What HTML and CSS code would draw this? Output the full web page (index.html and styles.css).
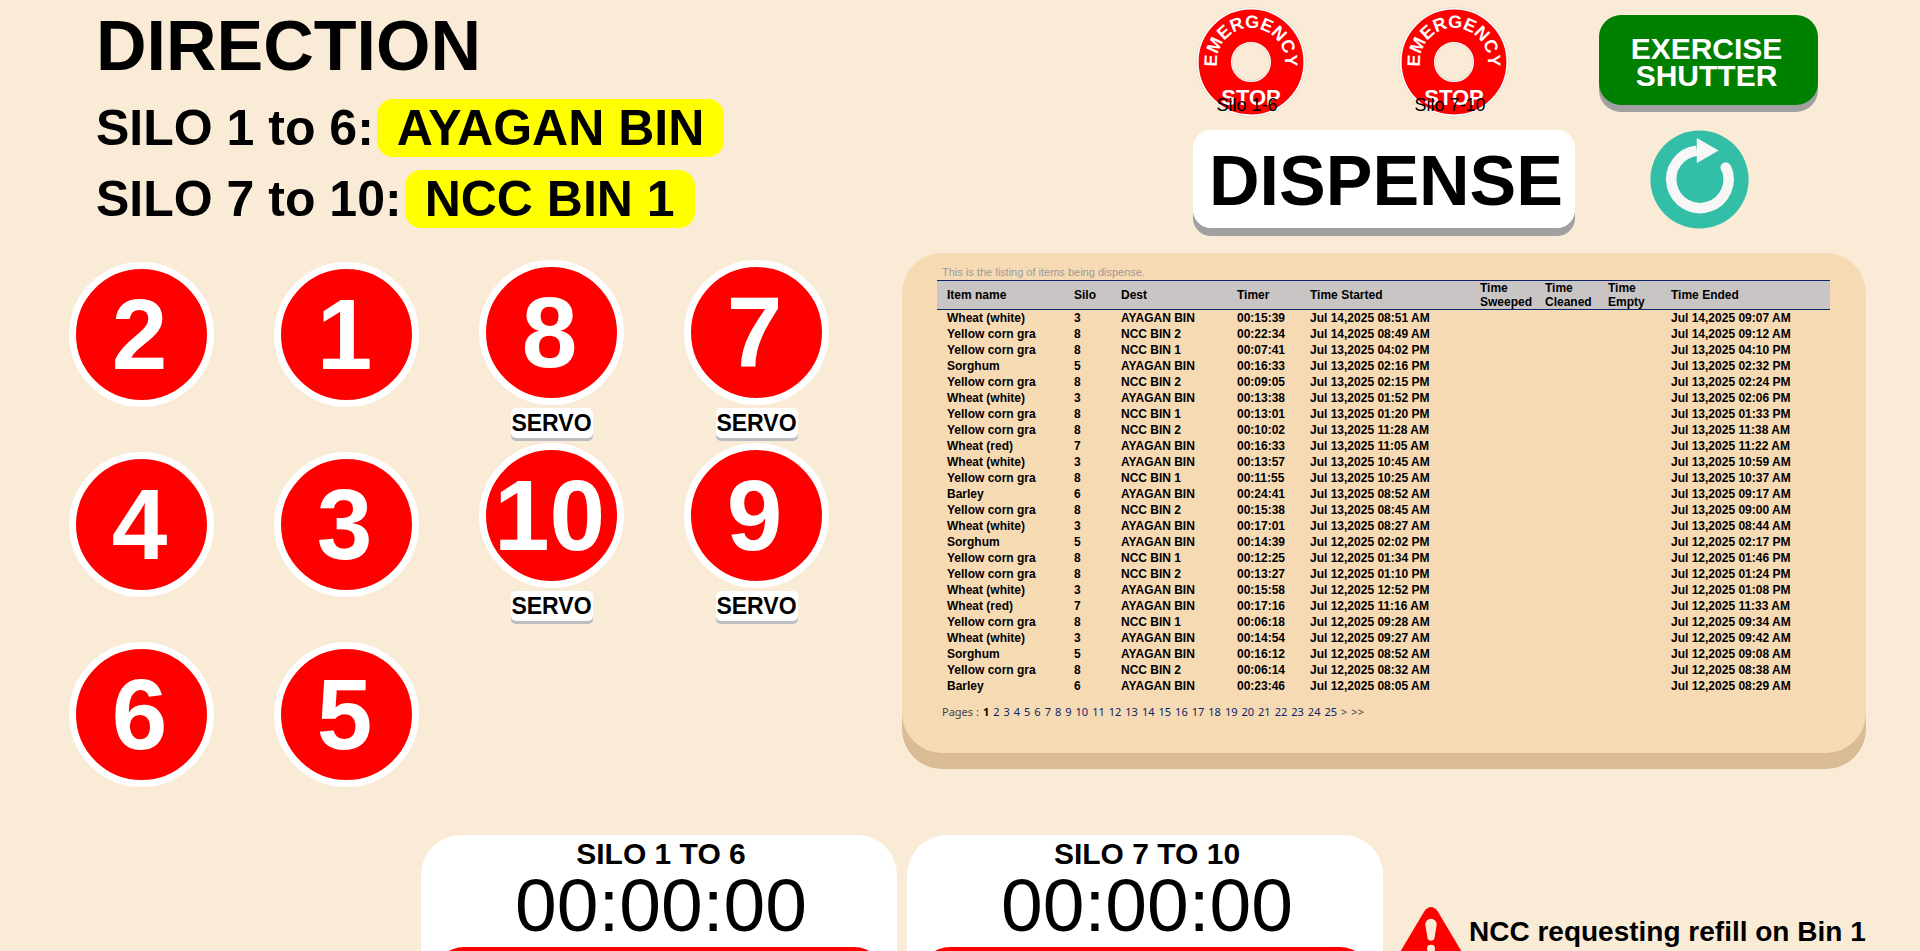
FILE: index.html
```html
<!DOCTYPE html>
<html lang="en">
<head>
<meta charset="utf-8">
<title>Silo dispenser</title>
<link rel="stylesheet" href="styles.css">
</head>
<body>
<main class="page">
  <section class="left">
    <div class="direction">
      <h1 class="direction-title">DIRECTION</h1>
      <p class="route">SILO 1 to 6:<span class="bin">AYAGAN BIN</span></p>
      <p class="route">SILO 7 to 10:<span class="bin">NCC BIN 1</span></p>
    </div>
    <div class="board">
      <div class="stack">
        <button class="silo">2</button>
        <button class="silo">4</button>
        <button class="silo">6</button>
      </div>
      <div class="stack">
        <button class="silo">1</button>
        <button class="silo">3</button>
        <button class="silo">5</button>
      </div>
      <div class="stack servo-stack">
        <button class="silo">8</button>
        <button class="servo">SERVO</button>
        <button class="silo">10</button>
        <button class="servo">SERVO</button>
      </div>
      <div class="stack servo-stack">
        <button class="silo">7</button>
        <button class="servo">SERVO</button>
        <button class="silo">9</button>
        <button class="servo">SERVO</button>
      </div>
    </div>
  </section>

  <section class="right">
    <div class="controls controls-top">
      <div class="stops">
        <button class="stop">
          <svg class="stop-sign" viewBox="-55 -55 110 110">
            <circle r="36.5" fill="none" stroke="#d8cfc4" stroke-width="36"/>
            <circle r="36.5" fill="none" stroke="#fff" stroke-width="35"/>
            <circle r="36.2" fill="none" stroke="#f00" stroke-width="32.4"/>
            <path id="arc-a" d="M-31.4 13A34 34 0 1 1 31.4 13" fill="none"/>
            <text class="stop-arc"><textPath href="#arc-a" startOffset="50%">EMERGENCY</textPath></text>
            <text class="stop-word" y="43">STOP</text>
          </svg>
          <span class="stop-label">Silo 1-6</span>
        </button>
        <button class="stop">
          <svg class="stop-sign" viewBox="-55 -55 110 110">
            <circle r="36.5" fill="none" stroke="#d8cfc4" stroke-width="36"/>
            <circle r="36.5" fill="none" stroke="#fff" stroke-width="35"/>
            <circle r="36.2" fill="none" stroke="#f00" stroke-width="32.4"/>
            <path id="arc-b" d="M-31.4 13A34 34 0 1 1 31.4 13" fill="none"/>
            <text class="stop-arc"><textPath href="#arc-b" startOffset="50%">EMERGENCY</textPath></text>
            <text class="stop-word" y="43">STOP</text>
          </svg>
          <span class="stop-label">Silo 7-10</span>
        </button>
      </div>
      <button class="exercise">EXERCISE<br>SHUTTER</button>
    </div>
    <div class="controls controls-main">
      <button class="dispense">DISPENSE</button>
      <button class="refresh" aria-label="Refresh">
        <svg class="refresh-icon" viewBox="-50 -50 100 100">
          <circle r="49.6" fill="#33bea8"/>
          <path d="M26.8 -12.2A29 29 0 1 1 -2.7 -29" fill="none" stroke="#f7f7f7" stroke-width="10.6"/>
          <circle cx="26.4" cy="-12.2" r="5.2" fill="#f7f7f7"/>
          <path d="M-2.7 -42L19.3 -29.3L-2.7 -16.7Z" fill="#f7f7f7"/>
        </svg>
      </button>
    </div>

    <div class="panel">
      <p class="note">This is the listing of items being dispense.</p>
      <table class="log">
        <colgroup>
          <col class="c-item"><col class="c-silo"><col class="c-dest"><col class="c-timer"><col class="c-start"><col class="c-swept"><col class="c-step"><col class="c-step"><col>
        </colgroup>
        <thead>
          <tr><th>Item name</th><th>Silo</th><th>Dest</th><th>Timer</th><th>Time Started</th><th>Time<br>Sweeped</th><th>Time<br>Cleaned</th><th>Time<br>Empty</th><th>Time Ended</th></tr>
        </thead>
        <tbody>
          <tr><td>Wheat (white)</td><td>3</td><td>AYAGAN BIN</td><td>00:15:39</td><td>Jul 14,2025 08:51 AM</td><td></td><td></td><td></td><td>Jul 14,2025 09:07 AM</td></tr>
          <tr><td>Yellow corn gra</td><td>8</td><td>NCC BIN 2</td><td>00:22:34</td><td>Jul 14,2025 08:49 AM</td><td></td><td></td><td></td><td>Jul 14,2025 09:12 AM</td></tr>
          <tr><td>Yellow corn gra</td><td>8</td><td>NCC BIN 1</td><td>00:07:41</td><td>Jul 13,2025 04:02 PM</td><td></td><td></td><td></td><td>Jul 13,2025 04:10 PM</td></tr>
          <tr><td>Sorghum</td><td>5</td><td>AYAGAN BIN</td><td>00:16:33</td><td>Jul 13,2025 02:16 PM</td><td></td><td></td><td></td><td>Jul 13,2025 02:32 PM</td></tr>
          <tr><td>Yellow corn gra</td><td>8</td><td>NCC BIN 2</td><td>00:09:05</td><td>Jul 13,2025 02:15 PM</td><td></td><td></td><td></td><td>Jul 13,2025 02:24 PM</td></tr>
          <tr><td>Wheat (white)</td><td>3</td><td>AYAGAN BIN</td><td>00:13:38</td><td>Jul 13,2025 01:52 PM</td><td></td><td></td><td></td><td>Jul 13,2025 02:06 PM</td></tr>
          <tr><td>Yellow corn gra</td><td>8</td><td>NCC BIN 1</td><td>00:13:01</td><td>Jul 13,2025 01:20 PM</td><td></td><td></td><td></td><td>Jul 13,2025 01:33 PM</td></tr>
          <tr><td>Yellow corn gra</td><td>8</td><td>NCC BIN 2</td><td>00:10:02</td><td>Jul 13,2025 11:28 AM</td><td></td><td></td><td></td><td>Jul 13,2025 11:38 AM</td></tr>
          <tr><td>Wheat (red)</td><td>7</td><td>AYAGAN BIN</td><td>00:16:33</td><td>Jul 13,2025 11:05 AM</td><td></td><td></td><td></td><td>Jul 13,2025 11:22 AM</td></tr>
          <tr><td>Wheat (white)</td><td>3</td><td>AYAGAN BIN</td><td>00:13:57</td><td>Jul 13,2025 10:45 AM</td><td></td><td></td><td></td><td>Jul 13,2025 10:59 AM</td></tr>
          <tr><td>Yellow corn gra</td><td>8</td><td>NCC BIN 1</td><td>00:11:55</td><td>Jul 13,2025 10:25 AM</td><td></td><td></td><td></td><td>Jul 13,2025 10:37 AM</td></tr>
          <tr><td>Barley</td><td>6</td><td>AYAGAN BIN</td><td>00:24:41</td><td>Jul 13,2025 08:52 AM</td><td></td><td></td><td></td><td>Jul 13,2025 09:17 AM</td></tr>
          <tr><td>Yellow corn gra</td><td>8</td><td>NCC BIN 2</td><td>00:15:38</td><td>Jul 13,2025 08:45 AM</td><td></td><td></td><td></td><td>Jul 13,2025 09:00 AM</td></tr>
          <tr><td>Wheat (white)</td><td>3</td><td>AYAGAN BIN</td><td>00:17:01</td><td>Jul 13,2025 08:27 AM</td><td></td><td></td><td></td><td>Jul 13,2025 08:44 AM</td></tr>
          <tr><td>Sorghum</td><td>5</td><td>AYAGAN BIN</td><td>00:14:39</td><td>Jul 12,2025 02:02 PM</td><td></td><td></td><td></td><td>Jul 12,2025 02:17 PM</td></tr>
          <tr><td>Yellow corn gra</td><td>8</td><td>NCC BIN 1</td><td>00:12:25</td><td>Jul 12,2025 01:34 PM</td><td></td><td></td><td></td><td>Jul 12,2025 01:46 PM</td></tr>
          <tr><td>Yellow corn gra</td><td>8</td><td>NCC BIN 2</td><td>00:13:27</td><td>Jul 12,2025 01:10 PM</td><td></td><td></td><td></td><td>Jul 12,2025 01:24 PM</td></tr>
          <tr><td>Wheat (white)</td><td>3</td><td>AYAGAN BIN</td><td>00:15:58</td><td>Jul 12,2025 12:52 PM</td><td></td><td></td><td></td><td>Jul 12,2025 01:08 PM</td></tr>
          <tr><td>Wheat (red)</td><td>7</td><td>AYAGAN BIN</td><td>00:17:16</td><td>Jul 12,2025 11:16 AM</td><td></td><td></td><td></td><td>Jul 12,2025 11:33 AM</td></tr>
          <tr><td>Yellow corn gra</td><td>8</td><td>NCC BIN 1</td><td>00:06:18</td><td>Jul 12,2025 09:28 AM</td><td></td><td></td><td></td><td>Jul 12,2025 09:34 AM</td></tr>
          <tr><td>Wheat (white)</td><td>3</td><td>AYAGAN BIN</td><td>00:14:54</td><td>Jul 12,2025 09:27 AM</td><td></td><td></td><td></td><td>Jul 12,2025 09:42 AM</td></tr>
          <tr><td>Sorghum</td><td>5</td><td>AYAGAN BIN</td><td>00:16:12</td><td>Jul 12,2025 08:52 AM</td><td></td><td></td><td></td><td>Jul 12,2025 09:08 AM</td></tr>
          <tr><td>Yellow corn gra</td><td>8</td><td>NCC BIN 2</td><td>00:06:14</td><td>Jul 12,2025 08:32 AM</td><td></td><td></td><td></td><td>Jul 12,2025 08:38 AM</td></tr>
          <tr><td>Barley</td><td>6</td><td>AYAGAN BIN</td><td>00:23:46</td><td>Jul 12,2025 08:05 AM</td><td></td><td></td><td></td><td>Jul 12,2025 08:29 AM</td></tr>
        </tbody>
      </table>
      <nav class="pages">
        <span>Pages :</span><b class="current">1</b>
        <a href="#">2</a><a href="#">3</a><a href="#">4</a><a href="#">5</a><a href="#">6</a><a href="#">7</a><a href="#">8</a><a href="#">9</a><a href="#">10</a><a href="#">11</a><a href="#">12</a><a href="#">13</a><a href="#">14</a><a href="#">15</a><a href="#">16</a><a href="#">17</a><a href="#">18</a><a href="#">19</a><a href="#">20</a><a href="#">21</a><a href="#">22</a><a href="#">23</a><a href="#">24</a><a href="#">25</a><a class="step" href="#">&gt;</a><a class="step" href="#">&gt;&gt;</a>
      </nav>
    </div>
  </section>

  <footer class="timers">
    <section class="timer">
      <h2 class="timer-title">SILO 1 TO 6</h2>
      <div class="timer-value">00:00:00</div>
      <button class="timer-button" aria-label="Stop silo 1 to 6"></button>
    </section>
    <section class="timer">
      <h2 class="timer-title">SILO 7 TO 10</h2>
      <div class="timer-value">00:00:00</div>
      <button class="timer-button" aria-label="Stop silo 7 to 10"></button>
    </section>
    <div class="alert">
      <svg class="alert-icon" viewBox="0 0 64 58">
        <path d="M25.5 4Q32 -4 38.5 4L62 43.500Q67 55 57 57H7Q-3 55 2 43.500Z" fill="#f00"/>
        <path d="M26.300 17.500A5.700 5.700 0 0 1 37.700 17.500L35.500 31A3.600 3.600 0 0 1 28.500 31Z" fill="#faebd7"/>
        <circle cx="32" cy="41.700" r="4" fill="#faebd7"/>
      </svg>
      <span class="alert-text">NCC requesting refill on Bin 1</span>
    </div>
  </footer>
</main>
</body>
</html>
```
FILE: styles.css
```css
* {
  box-sizing: border-box;
}

body {
  margin: 0;
  height: 100vh;
  overflow: hidden;
  background: #faebd7;
  color: #000;
  font-family: "Liberation Sans", Arial, sans-serif;
}

button {
  padding: 0;
  border: 0;
  font-family: inherit;
  font-weight: bold;
  color: #000;
  cursor: pointer;
}

svg {
  display: block;
  width: 100%;
}

.page {
  display: grid;
  grid-template-columns: 902fr 1018fr;
}

/* Direction */

.direction {
  display: flex;
  flex-direction: column;
  gap: 13px;
  padding: 6px 0 0 96px;
}

.direction-title {
  margin: 0;
  font-size: 70px;
  line-height: 80px;
}

.route {
  display: flex;
  gap: 3px;
  margin: 0;
  font-size: 50px;
  font-weight: bold;
  line-height: 58px;
}

.bin {
  padding: 0 20px;
  border-radius: 16px;
  background: #ff0;
}

/* Silo board */

.board {
  display: flex;
  gap: 60px;
  padding: 34px 0 0 69px;
}

.stack {
  display: flex;
  flex-direction: column;
  align-items: center;
  gap: 45px;
}

.servo-stack {
  gap: 3px;
  margin-top: -2px;
}

.silo {
  width: 145px;
  height: 145px;
  padding-right: 4px;
  border: 7px solid #fff;
  border-radius: 50%;
  background: #f00;
  color: #fff;
  font-size: 100px;
  line-height: 131px;
}

.servo {
  width: 82px;
  height: 30px;
  margin-bottom: 2px;
  border-radius: 5px;
  background: #fff;
  box-shadow: 0 3px #bbbdc2;
  font-size: 23px;
  line-height: 30px;
}

/* Controls */

.controls {
  display: flex;
  justify-content: flex-end;
}

.controls-top {
  gap: 90px;
  padding: 7px 102px 0 0;
}

.stops {
  display: flex;
  gap: 93px;
}

.stop {
  position: relative;
  width: 110px;
  height: 110px;
  border-radius: 50%;
  background: none;
}

.stop-arc,
.stop-word {
  fill: #fff;
  font-weight: bold;
  text-anchor: middle;
}

.stop-arc {
  font-size: 18px;
}

.stop-word {
  font-size: 22px;
}

.stop-label {
  position: absolute;
  left: 0;
  right: 8px;
  bottom: 2px;
  font-size: 18px;
  font-weight: normal;
  line-height: 20px;
}

.exercise {
  width: 219px;
  height: 90px;
  margin-top: 8px;
  padding: 4px 4px 0 0;
  border-radius: 22px;
  background: #008000;
  box-shadow: 0 7px #a0a0a0;
  color: #fff;
  font-size: 30px;
  line-height: 27px;
}

.controls-main {
  gap: 75px;
  padding: 13px 171px 0 0;
}

.dispense {
  width: 382px;
  height: 98px;
  padding: 4px 0 0 4px;
  border-radius: 18px;
  background: #fff;
  box-shadow: 0 8px #a0a0a0;
  font-size: 70px;
  line-height: 94px;
}

.refresh {
  width: 99px;
  height: 99px;
  border-radius: 50%;
  background: none;
}

/* Dispense log */

.panel {
  margin: 24px 54px 0 0;
  padding: 12px 36px 33px 35px;
  border-radius: 40px;
  background: #f6dab3;
  box-shadow: 0 16px #d9bb95;
}

.note {
  margin: 0;
  padding-left: 5px;
  color: #999;
  font-size: 11px;
  line-height: 15px;
}

.log {
  width: 100%;
  table-layout: fixed;
  border-spacing: 0;
  font-size: 12px;
  font-weight: bold;
  line-height: 16px;
  white-space: nowrap;
}

.log th,
.log td {
  height: 16px;
  padding: 0 0 0 10px;
  text-align: left;
}

.log th {
  border-top: 1px solid #0a246a;
  border-bottom: 1px solid #0a246a;
  background: #c9c5c5;
  line-height: 14px;
}

.c-item { width: 127px; }
.c-silo { width: 47px; }
.c-dest { width: 116px; }
.c-timer { width: 73px; }
.c-start { width: 170px; }
.c-swept { width: 65px; }
.c-step { width: 63px; }

.pages {
  display: flex;
  gap: 4px;
  padding: 10px 0 0 5px;
  color: #444;
  font-family: "Noto Sans", sans-serif;
  font-size: 11px;
  line-height: 16px;
}

.pages a {
  color: #0a246a;
  text-decoration: none;
}

.pages .step {
  color: #444;
}

.current {
  color: #000;
}

/* Timers and alert */

.timers {
  grid-column: 1 / -1;
  display: flex;
  gap: 10px;
  margin-top: 48px;
  padding: 0 54px 0 421px;
}

.timer {
  flex: 0 1 476px;
  padding: 3px 13px 13px;
  border-radius: 40px;
  background: #fff;
  box-shadow: 0 16px #bbbdc2;
  text-align: center;
}

.timer-title,
.timer-value {
  padding-left: 4px;
}

.timer-title {
  margin: 0;
  font-size: 30px;
  line-height: 32px;
}

.timer-value {
  font-size: 75px;
  line-height: 70px;
}

.timer-button {
  display: block;
  width: 100%;
  height: 90px;
  margin-top: 7px;
  border-radius: 30px;
  background: #f00;
}

.alert {
  flex: 1;
  display: flex;
  align-items: flex-start;
  gap: 6px;
  padding: 72px 0 0 6px;
  white-space: nowrap;
}

.alert-icon {
  flex: none;
  width: 64px;
}

.alert-text {
  font-size: 28px;
  font-weight: bold;
  line-height: 50px;
}
```
